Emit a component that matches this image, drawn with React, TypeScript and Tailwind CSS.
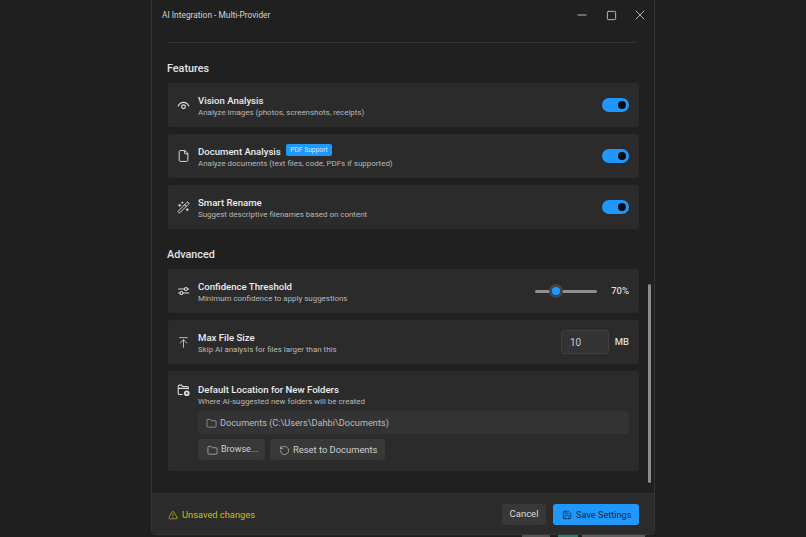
import { ArrowUpToLine, File, Folder, Minus, RotateCcw, Save, Square, TriangleAlert, WandSparkles, X } from "lucide-react";
import type { ReactNode } from "react";

function EyeIcon() {
  return (
    <svg viewBox="0 0 16 16" className="h-[13px] w-[13px]" fill="none" stroke="currentColor" strokeWidth="1.5" strokeLinecap="round">
      <path d="M1.5 8.500C3 5.600 5.300 4.200 8 4.200s5 1.400 6.500 4.300" />
      <circle cx="8" cy="9.600" r="2.300" />
    </svg>
  );
}

function SlidersIcon() {
  return (
    <svg viewBox="0 0 16 16" className="h-[14px] w-[14px]" fill="none" stroke="currentColor" strokeWidth="1.3" strokeLinecap="round">
      <path d="M2 5.500h7M13 5.500h1.500M2 10.500h1.500M7.500 10.500h7" />
      <circle cx="11" cy="5.500" r="1.800" />
      <circle cx="5.500" cy="10.500" r="1.800" />
    </svg>
  );
}

function FolderBadgeIcon() {
  return (
    <svg viewBox="0 0 16 16" className="h-[14px] w-[14px]" fill="none" stroke="currentColor" strokeWidth="1.300">
      <path d="M7 13.500H3a1.500 1.500 0 0 1-1.500-1.500V3.500A1.500 1.500 0 0 1 3 2h2.500L7 3.600h5.500A1.500 1.500 0 0 1 14 5.100V7M1.500 6h12.500" />
      <circle cx="12" cy="12" r="3.500" fill="currentColor" stroke="none" />
      <path d="M10.600 12h2.800M12 10.600v2.800" stroke="#2b2b2b" strokeWidth="1" />
    </svg>
  );
}

function Row({ icon, title, badge, sub, children }: { icon: ReactNode; title: string; badge?: string; sub: string; children?: ReactNode }) {
  return (
    <div className="flex h-[44px] items-center rounded-[3px] bg-[#2b2b2b] pl-[9px] pr-[10px]">
      <div className="flex w-[13px] justify-center text-[#dedede]">{icon}</div>
      <div className="ml-[8px] flex-1 pt-[3px]">
        <div className="flex h-[12px] items-center gap-[5px] text-[9.600px] leading-[12px] font-medium text-[#ececec]">
          {title}
          {badge && (
            <span className="relative top-[-2px] rounded-[2px] bg-[#2098fb] px-[4.500px] text-[6.700px] leading-[12px] font-normal text-[#cfe7fb]">{badge}</span>
          )}
        </div>
        <div className="text-[7.950px] leading-[11px] text-[#b8b8b8]">{sub}</div>
      </div>
      {children}
    </div>
  );
}

function Toggle() {
  return (
    <div className="flex h-[14px] w-[27px] items-center justify-end rounded-full bg-[#2098fb] pr-[3px]">
      <div className="h-[8px] w-[8px] rounded-full bg-[#050a10]" />
    </div>
  );
}

export default function App() {
  return (
    <div className="relative h-[537px] w-[806px] overflow-hidden bg-[#1f1f1f] font-['Roboto','Noto_Sans',sans-serif]">
      <div className="ml-[151px] flex h-[535px] w-[504px] flex-col rounded-b-[5px] border-x border-b border-[#353535] bg-[#202020]">
        {/* title bar */}
        <div className="flex h-[30px] shrink-0 items-center pl-[10px] pr-[6px]">
          <span className="flex-1 text-[8.400px] text-[#d4d4d4]">AI Integration - Multi-Provider</span>
          <div className="flex items-center text-[#c4c4c4]">
            <Minus className="h-[14px] w-[14px]" strokeWidth={1.6} />
            <Square className="ml-[17px] h-[11px] w-[11px]" strokeWidth={2} />
            <X className="ml-[15px] h-[16px] w-[16px]" strokeWidth={1.3} />
          </div>
        </div>

        {/* scroll area */}
        <div className="relative flex-1 overflow-hidden pl-[15px] pr-[15px]">
          <div className="ml-[1px] mr-[2px] mt-[12px] h-px bg-[#333333]" />
          <h2 className="mt-[18px] text-[10.800px] leading-[16px] font-medium text-[#e4e4e4]">Features</h2>
          <div className="ml-[1px] mt-[6px] flex flex-col gap-[7px]">
            <Row icon={<EyeIcon />} title="Vision Analysis" sub="Analyze images (photos, screenshots, receipts)">
              <Toggle />
            </Row>
            <Row icon={<File className="h-[14px] w-[14px]" strokeWidth={1.8} />} title="Document Analysis" badge="PDF Support" sub="Analyze documents (text files, code, PDFs if supported)">
              <Toggle />
            </Row>
            <Row icon={<WandSparkles className="h-[13px] w-[13px]" strokeWidth={1.8} />} title="Smart Rename" sub="Suggest descriptive filenames based on content">
              <Toggle />
            </Row>
          </div>
          <h2 className="mt-[18px] text-[10.800px] leading-[16px] font-medium text-[#e4e4e4]">Advanced</h2>
          <div className="ml-[1px] mt-[6px] flex flex-col gap-[7px]">
            <Row icon={<SlidersIcon />} title="Confidence Threshold" sub="Minimum confidence to apply suggestions">
              <div className="relative h-[3px] w-[62px] rounded-full bg-[#8f8f8f]">
                <div className="absolute left-[17px] top-[-2.500px] h-[8px] w-[8px] rounded-full bg-[#2098fb] ring-[3px] ring-[#3b4650]" />
              </div>
              <span className="ml-[14px] w-[18px] text-right text-[9.500px] font-medium text-[#dcdcdc]">70%</span>
            </Row>
            <Row icon={<ArrowUpToLine className="h-[15px] w-[15px]" strokeWidth={1.5} />} title="Max File Size" sub="Skip AI analysis for files larger than this">
              <div className="flex h-[24px] w-[48px] items-center rounded-[3px] border border-[#3f3f3f] bg-[#333333] pl-[8px] text-[10px] text-[#c8c8c8]">10</div>
              <span className="ml-[5px] w-[15px] text-right text-[9.500px] font-medium text-[#dcdcdc]">MB</span>
            </Row>
            <div className="h-[100px] rounded-[3px] bg-[#2b2b2b] pl-[9px] pr-[10px] pt-[12px]">
              <div className="flex">
                <div className="flex w-[13px] justify-center text-[#dedede]">
                  <FolderBadgeIcon />
                </div>
                <div className="ml-[8px] pt-[1px]">
                  <div className="text-[9.600px] leading-[12px] font-medium text-[#ececec]">Default Location for New Folders</div>
                  <div className="text-[7.950px] leading-[11px] text-[#b8b8b8]">Where AI-suggested new folders will be created</div>
                </div>
              </div>
              <div className="ml-[21px] mt-[4px] flex h-[23px] items-center gap-[3px] rounded-[3px] bg-[#333333] pl-[8px] pt-[1px] text-[9.200px] text-[#bcbcbc]">
                <Folder className="h-[11px] w-[11px]" strokeWidth={1.4} />
                Documents (C:\Users\Dahbi\Documents)
              </div>
              <div className="ml-[21px] mt-[5px] flex gap-[5px]">
                <button className="flex h-[21px] w-[67px] items-center gap-[3px] rounded-[3px] bg-[#383838] pl-[9px] pt-[1px] text-[9px] text-[#cfcfcf]">
                  <Folder className="h-[11px] w-[11px]" strokeWidth={1.4} />
                  Browse...
                </button>
                <button className="flex h-[21px] w-[115px] items-center gap-[3px] rounded-[3px] bg-[#383838] pl-[9px] pt-[1px] text-[9.400px] text-[#cfcfcf]">
                  <RotateCcw className="h-[11px] w-[11px]" strokeWidth={1.4} />
                  Reset to Documents
                </button>
              </div>
            </div>
          </div>
          {/* scrollbar */}
          <div className="absolute right-[3px] top-[254px] h-[199px] w-[3px] rounded-full bg-[#8c8c8c]" />
        </div>

        {/* footer */}
        <div className="flex h-[41px] shrink-0 items-center justify-between rounded-b-[5px] border-t border-[#2f2f2f] bg-[#2b2b2b] pl-[16px] pr-[15px]">
          <div className="flex items-center gap-[4px] pt-[2px] text-[9.300px] text-[#cdbd1a]">
            <TriangleAlert className="h-[10px] w-[10px]" strokeWidth={1.7} />
            Unsaved changes
          </div>
          <div className="flex gap-[7px]">
            <button className="h-[21px] w-[44px] rounded-[3px] bg-[#383838] pt-[1px] text-[9.500px] text-[#dcdcdc]">Cancel</button>
            <button className="flex h-[21px] w-[86px] items-center gap-[4px] rounded-[3px] bg-[#2098fb] pl-[9px] pt-[1px] text-[9.200px] text-[#0b2c4a]">
              <Save className="h-[10px] w-[10px]" strokeWidth={1.8} />
              Save Settings
            </button>
          </div>
        </div>
      </div>

      {/* what peeks out under the window */}
      <div aria-hidden="true" className="ml-[522px] flex h-[2px] w-[124px] items-center overflow-hidden">
        <div className="h-[2px] w-[28px] bg-[#565656]" />
        <div className="ml-[8px] h-[2px] w-[20px] bg-[#2b7f6c]" />
        <div className="ml-[4px] h-[2px] w-[63px] bg-[#5e5e5e]" />
      </div>
    </div>
  );
}
